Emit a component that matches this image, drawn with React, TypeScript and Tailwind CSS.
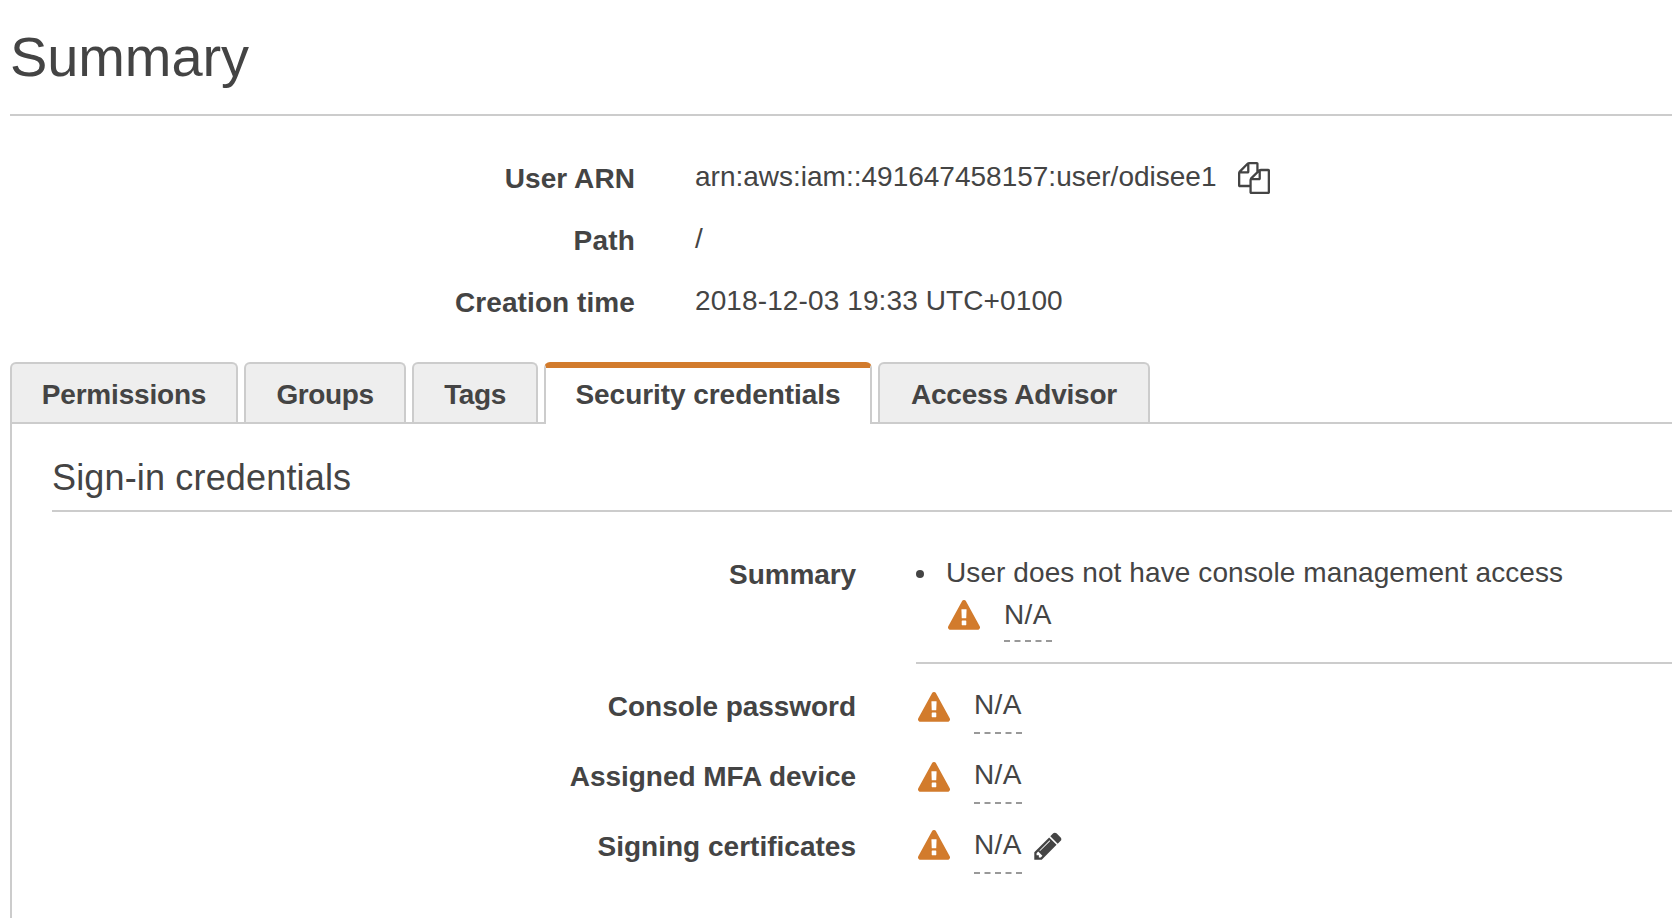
import type { ReactNode } from "react";

function CopyIcon() {
  return (
    <svg viewBox="0 0 1792 1792" className="h-8 w-8 shrink-0 fill-current" aria-hidden="true">
      <path d="M1696 384q40 0 68 28t28 68v1216q0 40-28 68t-68 28h-960q-40 0-68-28t-28-68v-288h-544q-40 0-68-28t-28-68v-672q0-40 20-88t48-76l408-408q28-28 76-48t88-20h416q40 0 68 28t28 68v328q68-40 128-40h416zm-544 213l-299 299h299v-299zm-640-384l-299 299h299v-299zm196 647l316-316v-416h-384v416q0 40-28 68t-68 28h-416v640h512v-256q0-40 20-88t48-76zm956 804v-1152h-384v416q0 40-28 68t-68 28h-416v640h896z" />
    </svg>
  );
}

function PencilIcon() {
  return (
    <svg viewBox="0 0 1792 1792" className="h-8 w-8 shrink-0 fill-current" aria-hidden="true">
      <path d="M491 1536l91-91-235-235-91 91v107h128v128h107zm523-928q0-22-22-22-10 0-17 7l-542 542q-7 7-7 17 0 22 22 22 10 0 17-7l542-542q7-7 7-17zm-54-192l416 416-832 832h-416v-416zm683 96q0 53-37 90l-166 166-416-416 165-166q38-37 91-37t91 37l235 236q37 37 37 90z" />
    </svg>
  );
}

function WarningIcon() {
  return (
    <svg viewBox="0 0 1792 1792" className="h-8 w-8 shrink-0 fill-[#d27b2c]" aria-hidden="true">
      <path
        fillRule="evenodd"
        d="M1024 1375v-190q0-14-9.5-23.5t-22.5-9.5h-192q-13 0-22.5 9.5t-9.5 23.5v190q0 14 9.5 23.5t22.5 9.5h192q13 0 22.5-9.5t9.5-23.5zM1022 1001l18-459q0-12-10-19-13-11-24-11h-220q-11 0-24 11-10 7-10 21l17 457q0 10 10 16.5t24 6.5h185q14 0 23.5-6.5t10.5-16.5zM1008 67l768 1408q35 63-2 126-17 29-46.5 46t-63.5 17h-1536q-34 0-63.5-17t-46.5-46q-37-63-2-126l768-1408q17-31 47-49t65-18 65 18 47 49z"
      />
    </svg>
  );
}

function Fact({ label, spacing, children }: { label: string; spacing: string; children: ReactNode }) {
  return (
    <div className="flex h-[62px]">
      <dt className={`w-[625px] shrink-0 pt-0.5 text-right font-bold ${spacing}`}>{label}</dt>
      <dd className="ml-[60px] flex">{children}</dd>
    </div>
  );
}

function Tab({ label, box }: { label: string; box: string }) {
  return (
    <button
      className={`h-[60px] shrink-0 rounded-t-md border-2 border-b-0 border-[#ccc] bg-[#eee] pt-2.5 pb-[7px] text-center font-bold leading-[41px] ${box}`}
    >
      {label}
    </button>
  );
}

function Credential({
  label,
  spacing,
  iconTop = "pt-2",
  editable = false,
}: {
  label: string;
  spacing: string;
  iconTop?: string;
  editable?: boolean;
}) {
  return (
    <div className="flex h-[70px]">
      <dt className={`w-[805px] shrink-0 pt-0.5 text-right font-bold ${spacing}`}>{label}</dt>
      <dd className="ml-[62px] flex items-start">
        <span className={iconTop}>
          <WarningIcon />
        </span>
        <span className="ml-6 h-[50px] w-12 border-b-2 border-dashed border-[#999] tracking-[0.4px]">N/A</span>
        {editable && (
          <span className="ml-2.5 pt-1.5">
            <PencilIcon />
          </span>
        )}
      </dd>
    </div>
  );
}

export default function App() {
  return (
    <main className="flex h-[918px] w-full flex-col overflow-hidden bg-white pl-2.5 font-['Liberation_Sans',Arial,sans-serif] text-[28px] leading-[41px] whitespace-nowrap text-[#444]">
      <header className="h-[116px] shrink-0 border-b-2 border-[#ccc] pt-5">
        <h1 className="text-[56px] leading-[73px] tracking-[-0.1px]">Summary</h1>
      </header>

      <dl className="shrink-0 pt-10">
        <Fact label="User ARN" spacing="tracking-[0.07px]">
          <span>arn:aws:iam::491647458157:user/odisee1</span>
          <span className="ml-[22px] pt-1.5">
            <CopyIcon />
          </span>
        </Fact>
        <Fact label="Path" spacing="tracking-[0.2px]">
          /
        </Fact>
        <Fact label="Creation time" spacing="tracking-[0.08px]">
          <span className="tracking-[0.11px]">2018-12-03 19:33 UTC+0100</span>
        </Fact>
      </dl>

      <nav className="z-10 mt-5 -mb-0.5 flex h-[62px] shrink-0 gap-1.5">
        <Tab label="Permissions" box="w-[228px] tracking-[-0.2px]" />
        <Tab label="Groups" box="w-[162px] tracking-[-0.4px]" />
        <Tab label="Tags" box="w-[126px] tracking-[-0.4px]" />
        <button className="h-[62px] w-[328px] shrink-0 rounded-t-md border-x-2 border-t-[6px] border-x-[#ccc] border-t-[#d27b2c] bg-white pt-1.5 pb-[9px] text-center font-bold leading-[41px] tracking-[-0.055px]">
          Security credentials
        </button>
        <Tab label="Access Advisor" box="w-[272px] tracking-[-0.22px]" />
      </nav>

      <section className="flex-1 border-t-2 border-l-2 border-[#ccc] pt-7">
        <h2 className="ml-10 border-b-2 border-[#ccc] pb-[7px] text-[36px] leading-[51px] tracking-[0.16px]">
          Sign-in credentials
        </h2>
        <dl className="pt-10">
          <div className="ml-[39px] flex">
            <dt className="w-[805px] shrink-0 pt-0.5 text-right font-bold tracking-[-0.1px]">Summary</dt>
            <dd className="ml-[60px] flex-1 border-b-2 border-[#ccc] pb-5">
              <ul>
                <li className="flex">
                  <span className="mt-[18px] mr-[22px] size-2 shrink-0 rounded-full bg-[#444]" />
                  <div>
                    <div className="h-[42px] tracking-[0.09px]">User does not have console management access</div>
                    <div className="flex items-start pl-0.5">
                      <span className="pt-1.5">
                        <WarningIcon />
                      </span>
                      <span className="ml-6 h-12 w-12 border-b-2 border-dashed border-[#999] tracking-[0.4px]">
                        N/A
                      </span>
                    </div>
                  </div>
                </li>
              </ul>
            </dd>
          </div>
          <div className="ml-[39px] pt-5">
            <Credential label="Console password" spacing="tracking-[-0.05px]" />
            <Credential label="Assigned MFA device" spacing="tracking-[-0.03px]" />
            <Credential label="Signing certificates" spacing="tracking-[0.01px]" iconTop="pt-1.5" editable />
          </div>
        </dl>
      </section>
    </main>
  );
}
